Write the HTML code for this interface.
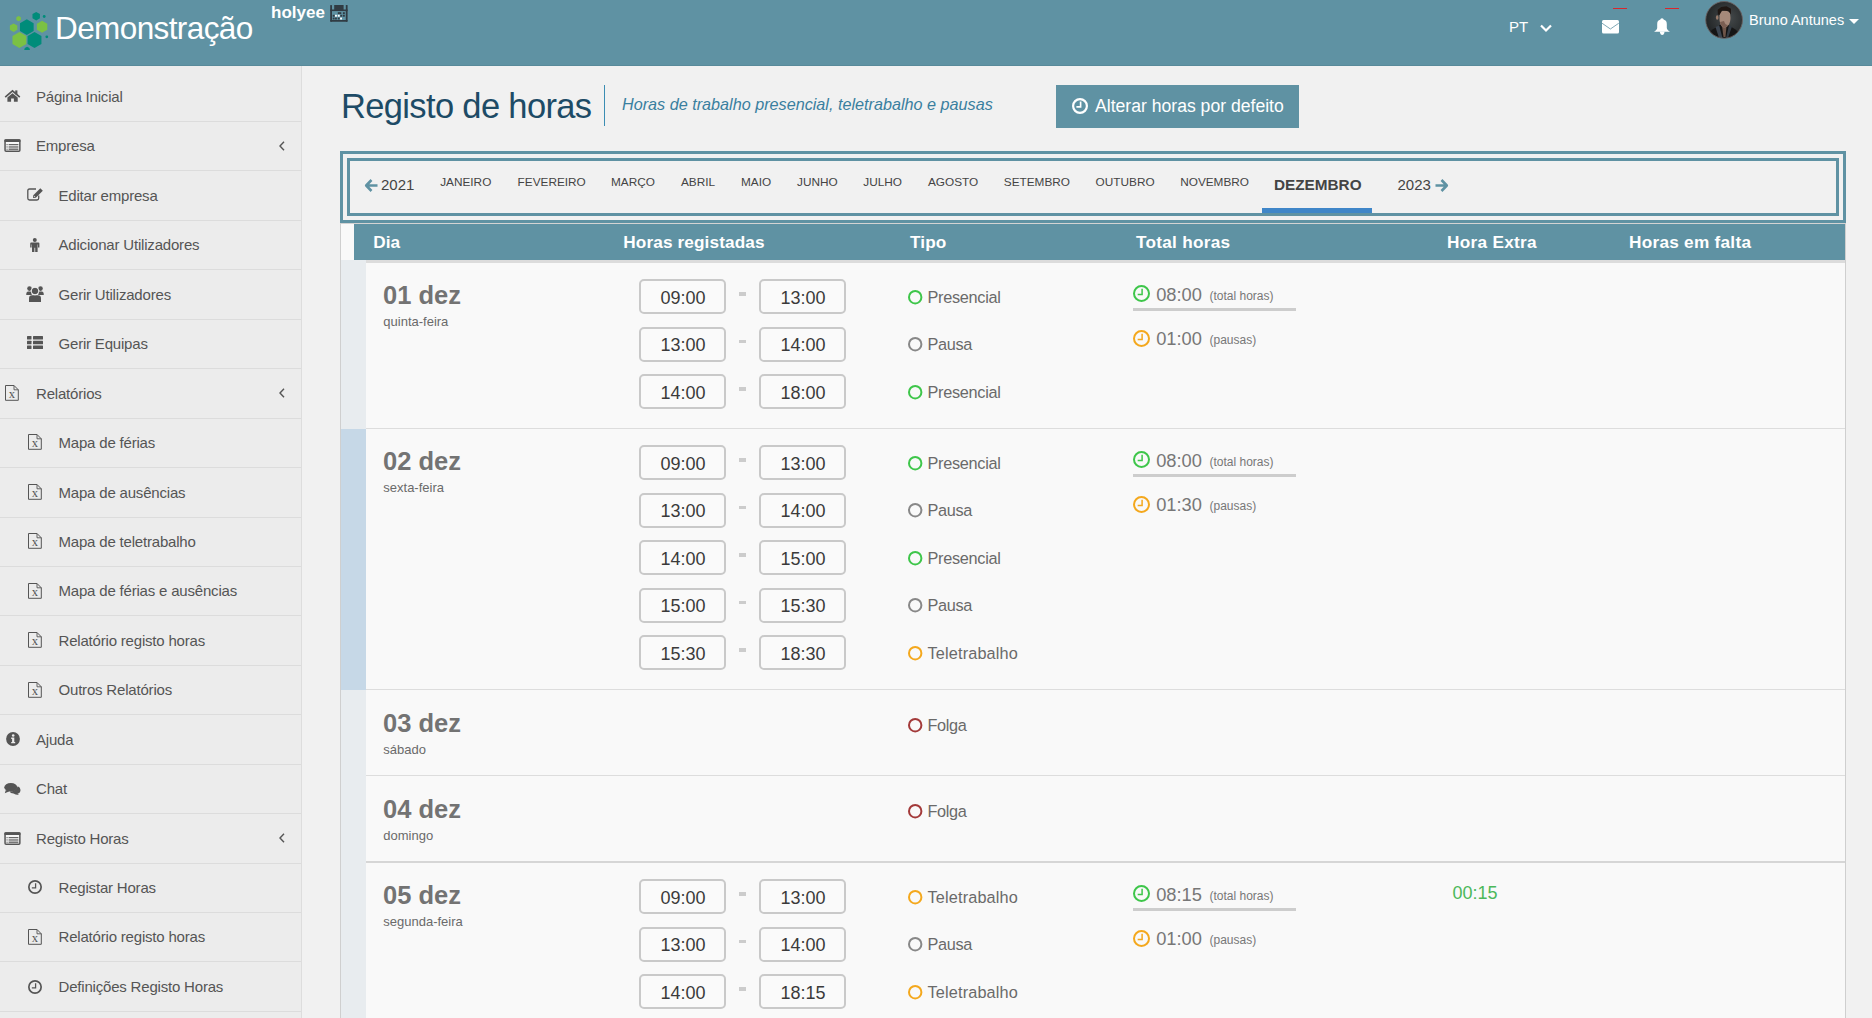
<!DOCTYPE html><html><head><meta charset="utf-8"><style>
*{margin:0;padding:0;box-sizing:border-box}
html,body{width:1872px;height:1018px;overflow:hidden;background:#f1f1f1;font-family:"Liberation Sans",sans-serif}
.t{position:absolute;white-space:nowrap}
.a{position:absolute}
svg{position:absolute;overflow:visible}
</style></head><body>
<div class="a" style="left:0px;top:0px;width:1872px;height:65px;background:#5f92a3;"></div>
<div class="a" style="left:0px;top:65px;width:1872px;height:1px;background:#588a9a;"></div>
<svg style="left:0px;top:0px" width="60" height="60" viewBox="0 0 60 60"><polygon points="26.80,35.00 19.96,31.05 19.96,23.15 26.80,19.20 33.64,23.15 33.64,31.05" fill="#008c7a"/><polygon points="19.40,48.10 12.47,44.10 12.47,36.10 19.40,32.10 26.33,36.10 26.33,44.10" fill="#7bc143"/><polygon points="34.50,48.10 27.57,44.10 27.57,36.10 34.50,32.10 41.43,36.10 41.43,44.10" fill="#008c7a"/><polygon points="42.10,32.80 36.90,29.80 36.90,23.80 42.10,20.80 47.30,23.80 47.30,29.80" fill="#7bc143"/><polygon points="13.60,32.00 9.88,29.85 9.88,25.55 13.60,23.40 17.32,25.55 17.32,29.85" fill="#7bc143"/><polygon points="36.20,20.50 32.48,18.35 32.48,14.05 36.20,11.90 39.92,14.05 39.92,18.35" fill="#008c7a"/><polygon points="18.60,21.20 16.35,19.90 16.35,17.30 18.60,16.00 20.85,17.30 20.85,19.90" fill="#7bc143"/><circle cx="44.2" cy="16.5" r="1.4" fill="#008c7a"/><circle cx="46.8" cy="36.8" r="1.4" fill="#008c7a"/><path d="M24.2,50 L24.8,48 L27.1,46.8 L29.4,48 L30,50 Z" fill="#008c7a"/></svg>
<div class="t" style="left:55px;top:12.58px;font-size:31.5px;line-height:31.5px;color:#ffffff;font-weight:normal;font-style:normal;letter-spacing:-0.6px">Demonstração</div>
<div class="t" style="left:271px;top:3.86px;font-size:17px;line-height:17px;color:#ffffff;font-weight:bold;font-style:normal;">holyee</div>
<svg style="left:325px;top:0px" width="30" height="26" viewBox="0 0 30 26"><rect x="5.2" y="5" width="1.8" height="16.7" rx="0.6" fill="#303b43"/><rect x="20.8" y="5" width="1.8" height="16.7" rx="0.6" fill="#303b43"/><rect x="5.2" y="20" width="17.4" height="1.8" rx="0.8" fill="#303b43"/><rect x="5.2" y="9.5" width="17.4" height="1.6" fill="#303b43"/><rect x="9.2" y="5" width="9.4" height="5.5" fill="#303b43"/><rect x="12.8" y="12.2" width="1.9" height="1.9" fill="#303b43"/><rect x="14.4" y="12.2" width="1.9" height="1.9" fill="#303b43"/><rect x="17.9" y="12.2" width="1.9" height="1.9" fill="#303b43"/><rect x="7.7" y="14.8" width="1.9" height="1.9" fill="#303b43"/><rect x="10" y="14.8" width="1.9" height="1.9" fill="#fff"/><rect x="12.8" y="14.8" width="1.9" height="1.9" fill="#fff"/><rect x="15.3" y="14.8" width="1.9" height="1.9" fill="#303b43"/><rect x="17.9" y="14.8" width="1.9" height="1.9" fill="#303b43"/><rect x="7.7" y="17.6" width="1.9" height="1.9" fill="#303b43"/><rect x="10" y="17.6" width="1.9" height="1.9" fill="#303b43"/><rect x="12.8" y="17.6" width="1.9" height="1.9" fill="#303b43"/><rect x="15.1" y="17.6" width="1.9" height="1.9" fill="#fff"/></svg>
<div class="t" style="left:1509px;top:19.30px;font-size:15px;line-height:15px;color:#ffffff;font-weight:normal;font-style:normal;">PT</div>
<svg style="left:1540px;top:24px" width="12" height="8" viewBox="0 0 12 8"><path d="M1,1.5 L6,6.5 L11,1.5" stroke="#fff" stroke-width="2.2" fill="none"/></svg>
<div class="a" style="left:1613px;top:7.8px;width:14px;height:1.2px;background:#d9262c;"></div>
<div class="a" style="left:1665px;top:7.8px;width:14px;height:1.2px;background:#d9262c;"></div>
<svg style="left:1602px;top:20px" width="17" height="14" viewBox="0 0 17 14"><rect x="0" y="0" width="17" height="13.5" rx="1.5" fill="#fff"/><path d="M0,3.2 L8.4,9 L16.8,3.2" stroke="#5f92a3" stroke-width="0.8" fill="none"/></svg>
<svg style="left:1654.1px;top:17.7px" width="16" height="17" viewBox="0 0 16 17"><path d="M8,0.3 C9.2,0.3 9.6,1.3 9.6,1.6 C11.8,2.2 12.8,3.8 12.8,6 L12.8,10 C12.8,11.5 14.5,12.8 16,13.8 L0,13.8 C1.5,12.8 3.2,11.5 3.2,10 L3.2,6 C3.2,3.8 4.2,2.2 6.4,1.6 C6.4,1.3 6.8,0.3 8,0.3 Z" fill="#fff"/><path d="M5.8,13.5 L10.6,13.5 C10.4,16 9.3,17 8.2,17 C7.1,17 6,16 5.8,13.5 Z" fill="#fff"/></svg>
<svg style="left:1705px;top:1px" width="38" height="38" viewBox="0 0 38 38"><defs><radialGradient id="ag" cx="60%" cy="45%" r="60%"><stop offset="0" stop-color="#464b4d"/><stop offset="1" stop-color="#222526"/></radialGradient><clipPath id="ac"><circle cx="19.1" cy="18.9" r="18.4"/></clipPath></defs><circle cx="19.1" cy="18.9" r="18.4" fill="url(#ag)"/><g clip-path="url(#ac)"><path d="M14,24 L24,24 L23,37 L15,37 Z" fill="#151515"/><path d="M17,25 L21.5,25 L20.5,36 L18.5,36 Z" fill="#6e5549"/><path d="M2,34 C6,29 10,26.5 13.5,25.5 L17.5,37 L2,40 Z" fill="#151515"/><path d="M36,34 C32,29 28,26.5 24.5,25.5 L21.5,37 L36,40 Z" fill="#151515"/><path d="M10.5,26 L14.2,24.6 L17.5,37 L14,37 Z" fill="#3c4550"/><path d="M24,24.6 L27,25.5 L23,37 L21,37 Z" fill="#333b44"/><path d="M14.5,12 C15,9.5 22,9 25,11.5 L25.5,17 C25.5,22 23,26.5 19.5,26.5 C16.5,26.5 15,23 14.5,19 Z" fill="#a5897a"/><path d="M19,20 C20,23 21,24 23,24 C22,26 20.5,26.5 19.5,26.5 C17,26.5 15.5,24 15,21 Z" fill="#7a5e52"/><ellipse cx="12.2" cy="16.5" rx="1.3" ry="2.2" fill="#9a7c6c"/><path d="M12.8,13.6 L12.7,8.7 L16.2,6.1 L21.5,5.2 L26,7.8 L26,13.6 L23.3,10 L17.1,9.6 L14.5,14 Z" fill="#1f1713"/></g><circle cx="19.1" cy="18.9" r="18.4" fill="none" stroke="#6a6262" stroke-width="0.9"/></svg>
<div class="t" style="left:1749px;top:12.97px;font-size:14.5px;line-height:14.5px;color:#ffffff;font-weight:normal;font-style:normal;">Bruno Antunes</div>
<svg style="left:1849px;top:19px" width="10" height="5" viewBox="0 0 10 5"><path d="M0,0 L10,0 L5,5 Z" fill="#fff"/></svg>
<div class="a" style="left:0px;top:66px;width:301px;height:952px;background:#ececec;"></div>
<div class="a" style="left:301px;top:66px;width:1px;height:952px;background:#dddddd;"></div>
<div class="t" style="left:36px;top:89.30px;font-size:15px;line-height:15px;color:#555555;font-weight:normal;font-style:normal;letter-spacing:-0.19px">Página Inicial</div>
<svg style="left:0px;top:0px" width="30" height="110" viewBox="0 0 30 110"><path d="M5.2,97.2 L12.5,90.9 L19.8,97.2" fill="none" stroke="#555555" stroke-width="1.7"/><rect x="15.2" y="90.4" width="2.2" height="4" fill="#555555"/><path d="M7.4,97.6 L12.5,93.3 L17.7,97.6 L17.7,101.8 L13.9,101.8 L13.9,98.6 L11.1,98.6 L11.1,101.8 L7.4,101.8 Z" fill="#555555"/></svg>
<div class="a" style="left:0px;top:121.0px;width:301px;height:1px;background:#dcdcdc;"></div>
<div class="t" style="left:36px;top:138.30px;font-size:15px;line-height:15px;color:#555555;font-weight:normal;font-style:normal;letter-spacing:-0.19px">Empresa</div>
<svg style="left:0.0px;top:0.060000000000002274px" width="30" height="160" viewBox="0 0 30 160"><rect x="5.05" y="140.05" width="14.8" height="11.3" rx="1" fill="#f7f7f7" stroke="#555555" stroke-width="1.5"/><rect x="4.3" y="139.3" width="16.3" height="2.8" rx="1" fill="#555555"/><rect x="6.5" y="144.1" width="1.1" height="1.1" fill="#555555"/><rect x="6.5" y="146.4" width="1.1" height="1.1" fill="#555555"/><rect x="6.5" y="148.7" width="1.1" height="1.1" fill="#555555"/><rect x="8.6" y="144.1" width="9.8" height="1.1" fill="#555555"/><rect x="8.6" y="147.5" width="9.8" height="1.2" fill="#cdcdcd"/><rect x="8.6" y="146.4" width="9.8" height="1.1" fill="#555555"/><rect x="8.6" y="148.7" width="9.8" height="1.1" fill="#555555"/></svg>
<div class="a" style="left:0px;top:170.44px;width:301px;height:1px;background:#dcdcdc;"></div>
<div class="t" style="left:58.5px;top:188.30px;font-size:15px;line-height:15px;color:#555555;font-weight:normal;font-style:normal;letter-spacing:-0.19px">Editar empresa</div>
<svg style="left:27px;top:188px" width="16" height="13" viewBox="0 0 16 13"><path d="M9,1 L2.5,1 Q0.8,1 0.8,2.7 L0.8,10.3 Q0.8,12 2.5,12 L10,12 Q11.7,12 11.7,10.3 L11.7,7.5" fill="none" stroke="#555555" stroke-width="1.3"/><path d="M6,10 L6.3,7.3 L13.3,0.3 L15.8,2.8 L8.8,9.8 Z" fill="#555555"/><path d="M7,8.9 L7.2,7.8 L8.3,8.9 Z" fill="#ececec"/></svg>
<div class="a" style="left:0px;top:219.88px;width:301px;height:1px;background:#dcdcdc;"></div>
<div class="t" style="left:58.5px;top:237.30px;font-size:15px;line-height:15px;color:#555555;font-weight:normal;font-style:normal;letter-spacing:-0.19px">Adicionar Utilizadores</div>
<svg style="left:30px;top:238px" width="10" height="14" viewBox="0 0 10 14"><circle cx="4.8" cy="2" r="2" fill="#555555"/><path d="M1.2,4.6 L8.4,4.6 Q9.4,4.6 9.4,5.6 L9.4,9.5 L8,9.5 L8,6.5 L7.6,6.5 L7.6,14 L5.2,14 L5.2,9.8 L4.4,9.8 L4.4,14 L2,14 L2,6.5 L1.6,6.5 L1.6,9.5 L0.2,9.5 L0.2,5.6 Q0.2,4.6 1.2,4.6 Z" fill="#555555"/></svg>
<div class="a" style="left:0px;top:269.32px;width:301px;height:1px;background:#dcdcdc;"></div>
<div class="t" style="left:58.5px;top:287.30px;font-size:15px;line-height:15px;color:#555555;font-weight:normal;font-style:normal;letter-spacing:-0.19px">Gerir Utilizadores</div>
<svg style="left:26.2px;top:286px" width="18" height="16" viewBox="0 0 18 16"><circle cx="3.5" cy="2.6" r="2.3" fill="#555555"/><circle cx="14.5" cy="2.6" r="2.3" fill="#555555"/><path d="M0.2,9 Q0.2,5.6 2.3,5.6 L5.5,5.6 L5.8,9 Z" fill="#555555"/><path d="M17.8,9 Q17.8,5.6 15.7,5.6 L12.5,5.6 L12.2,9 Z" fill="#555555"/><circle cx="9" cy="5" r="3.2" fill="#555555"/><path d="M3,16 L3,12.5 Q3,9.2 6,9.2 L12,9.2 Q15,9.2 15,12.5 L15,16 Z" fill="#555555"/><circle cx="9" cy="5" r="3.9" fill="none" stroke="#ececec" stroke-width="0.8"/></svg>
<div class="a" style="left:0px;top:318.76px;width:301px;height:1px;background:#dcdcdc;"></div>
<div class="t" style="left:58.5px;top:336.30px;font-size:15px;line-height:15px;color:#555555;font-weight:normal;font-style:normal;letter-spacing:-0.19px">Gerir Equipas</div>
<svg style="left:27px;top:336px" width="16" height="13" viewBox="0 0 16 13"><rect x="0" y="0" width="4.5" height="3.5" rx="0.5" fill="#555555"/><rect x="6" y="0" width="10" height="3.5" rx="0.5" fill="#555555"/><rect x="0" y="4.7" width="4.5" height="3.5" rx="0.5" fill="#555555"/><rect x="6" y="4.7" width="10" height="3.5" rx="0.5" fill="#555555"/><rect x="0" y="9.4" width="4.5" height="3.5" rx="0.5" fill="#555555"/><rect x="6" y="9.4" width="10" height="3.5" rx="0.5" fill="#555555"/></svg>
<div class="a" style="left:0px;top:368.2px;width:301px;height:1px;background:#dcdcdc;"></div>
<div class="t" style="left:36px;top:386.30px;font-size:15px;line-height:15px;color:#555555;font-weight:normal;font-style:normal;letter-spacing:-0.19px">Relatórios</div>
<svg style="left:5.2px;top:385px" width="14" height="16" viewBox="0 0 14 16"><path d="M0.5,0.5 L9,0.5 L13.3,4.8 L13.3,15.3 L0.5,15.3 Z" fill="none" stroke="#555555" stroke-width="1"/><path d="M9,0.5 L9,4.8 L13.3,4.8" fill="none" stroke="#555555" stroke-width="0.9"/><text x="6.9" y="13.3" text-anchor="middle" font-family="Liberation Serif" font-size="12.5" fill="#555555">x</text></svg>
<div class="a" style="left:0px;top:417.64px;width:301px;height:1px;background:#dcdcdc;"></div>
<div class="t" style="left:58.5px;top:435.30px;font-size:15px;line-height:15px;color:#555555;font-weight:normal;font-style:normal;letter-spacing:-0.19px">Mapa de férias</div>
<svg style="left:28px;top:434px" width="14" height="16" viewBox="0 0 14 16"><path d="M0.5,0.5 L9,0.5 L13.3,4.8 L13.3,15.3 L0.5,15.3 Z" fill="none" stroke="#555555" stroke-width="1"/><path d="M9,0.5 L9,4.8 L13.3,4.8" fill="none" stroke="#555555" stroke-width="0.9"/><text x="6.9" y="13.3" text-anchor="middle" font-family="Liberation Serif" font-size="12.5" fill="#555555">x</text></svg>
<div class="a" style="left:0px;top:467.08px;width:301px;height:1px;background:#dcdcdc;"></div>
<div class="t" style="left:58.5px;top:485.30px;font-size:15px;line-height:15px;color:#555555;font-weight:normal;font-style:normal;letter-spacing:-0.19px">Mapa de ausências</div>
<svg style="left:28px;top:483.5px" width="14" height="16" viewBox="0 0 14 16"><path d="M0.5,0.5 L9,0.5 L13.3,4.8 L13.3,15.3 L0.5,15.3 Z" fill="none" stroke="#555555" stroke-width="1"/><path d="M9,0.5 L9,4.8 L13.3,4.8" fill="none" stroke="#555555" stroke-width="0.9"/><text x="6.9" y="13.3" text-anchor="middle" font-family="Liberation Serif" font-size="12.5" fill="#555555">x</text></svg>
<div class="a" style="left:0px;top:516.52px;width:301px;height:1px;background:#dcdcdc;"></div>
<div class="t" style="left:58.5px;top:534.30px;font-size:15px;line-height:15px;color:#555555;font-weight:normal;font-style:normal;letter-spacing:-0.19px">Mapa de teletrabalho</div>
<svg style="left:28px;top:533px" width="14" height="16" viewBox="0 0 14 16"><path d="M0.5,0.5 L9,0.5 L13.3,4.8 L13.3,15.3 L0.5,15.3 Z" fill="none" stroke="#555555" stroke-width="1"/><path d="M9,0.5 L9,4.8 L13.3,4.8" fill="none" stroke="#555555" stroke-width="0.9"/><text x="6.9" y="13.3" text-anchor="middle" font-family="Liberation Serif" font-size="12.5" fill="#555555">x</text></svg>
<div class="a" style="left:0px;top:565.96px;width:301px;height:1px;background:#dcdcdc;"></div>
<div class="t" style="left:58.5px;top:583.30px;font-size:15px;line-height:15px;color:#555555;font-weight:normal;font-style:normal;letter-spacing:-0.19px">Mapa de férias e ausências</div>
<svg style="left:28px;top:582.5px" width="14" height="16" viewBox="0 0 14 16"><path d="M0.5,0.5 L9,0.5 L13.3,4.8 L13.3,15.3 L0.5,15.3 Z" fill="none" stroke="#555555" stroke-width="1"/><path d="M9,0.5 L9,4.8 L13.3,4.8" fill="none" stroke="#555555" stroke-width="0.9"/><text x="6.9" y="13.3" text-anchor="middle" font-family="Liberation Serif" font-size="12.5" fill="#555555">x</text></svg>
<div class="a" style="left:0px;top:615.4px;width:301px;height:1px;background:#dcdcdc;"></div>
<div class="t" style="left:58.5px;top:633.30px;font-size:15px;line-height:15px;color:#555555;font-weight:normal;font-style:normal;letter-spacing:-0.19px">Relatório registo horas</div>
<svg style="left:28px;top:632px" width="14" height="16" viewBox="0 0 14 16"><path d="M0.5,0.5 L9,0.5 L13.3,4.8 L13.3,15.3 L0.5,15.3 Z" fill="none" stroke="#555555" stroke-width="1"/><path d="M9,0.5 L9,4.8 L13.3,4.8" fill="none" stroke="#555555" stroke-width="0.9"/><text x="6.9" y="13.3" text-anchor="middle" font-family="Liberation Serif" font-size="12.5" fill="#555555">x</text></svg>
<div class="a" style="left:0px;top:664.8399999999999px;width:301px;height:1px;background:#dcdcdc;"></div>
<div class="t" style="left:58.5px;top:682.30px;font-size:15px;line-height:15px;color:#555555;font-weight:normal;font-style:normal;letter-spacing:-0.19px">Outros Relatórios</div>
<svg style="left:28px;top:681.5px" width="14" height="16" viewBox="0 0 14 16"><path d="M0.5,0.5 L9,0.5 L13.3,4.8 L13.3,15.3 L0.5,15.3 Z" fill="none" stroke="#555555" stroke-width="1"/><path d="M9,0.5 L9,4.8 L13.3,4.8" fill="none" stroke="#555555" stroke-width="0.9"/><text x="6.9" y="13.3" text-anchor="middle" font-family="Liberation Serif" font-size="12.5" fill="#555555">x</text></svg>
<div class="a" style="left:0px;top:714.28px;width:301px;height:1px;background:#dcdcdc;"></div>
<div class="t" style="left:36px;top:732.30px;font-size:15px;line-height:15px;color:#555555;font-weight:normal;font-style:normal;letter-spacing:-0.19px">Ajuda</div>
<svg style="left:5.5px;top:732px" width="14" height="14" viewBox="0 0 14 14"><circle cx="7" cy="7" r="6.9" fill="#555555"/><circle cx="7.2" cy="3.5" r="1.3" fill="#ececec"/><path d="M5.2,5.6 L8.3,5.6 L8.3,9.9 L9.2,9.9 L9.2,11.3 L5.2,11.3 L5.2,9.9 L6.1,9.9 L6.1,7 L5.2,7 Z" fill="#ececec"/></svg>
<div class="a" style="left:0px;top:763.72px;width:301px;height:1px;background:#dcdcdc;"></div>
<div class="t" style="left:36px;top:781.30px;font-size:15px;line-height:15px;color:#555555;font-weight:normal;font-style:normal;letter-spacing:-0.19px">Chat</div>
<svg style="left:4.3px;top:782.8px" width="17" height="12" viewBox="0 0 17 12"><path d="M16.5,7 Q16.5,10 13.5,10.8 L15,12 Q11,12 9.5,10.6 Q6.5,10.3 5.5,8.5 Q12,8.5 13.8,3.3 Q16.5,4.5 16.5,7 Z" fill="#555555"/><ellipse cx="6.8" cy="4.3" rx="6.5" ry="4.3" fill="#555555"/><path d="M1.8,7 L0.8,10.2 L5.5,8.2 Z" fill="#555555"/></svg>
<div class="a" style="left:0px;top:813.16px;width:301px;height:1px;background:#dcdcdc;"></div>
<div class="t" style="left:36px;top:831.30px;font-size:15px;line-height:15px;color:#555555;font-weight:normal;font-style:normal;letter-spacing:-0.19px">Registo Horas</div>
<svg style="left:0.20000000000000018px;top:692.5px" width="30" height="160" viewBox="0 0 30 160"><rect x="5.05" y="140.05" width="14.8" height="11.3" rx="1" fill="#f7f7f7" stroke="#555555" stroke-width="1.5"/><rect x="4.3" y="139.3" width="16.3" height="2.8" rx="1" fill="#555555"/><rect x="6.5" y="144.1" width="1.1" height="1.1" fill="#555555"/><rect x="6.5" y="146.4" width="1.1" height="1.1" fill="#555555"/><rect x="6.5" y="148.7" width="1.1" height="1.1" fill="#555555"/><rect x="8.6" y="144.1" width="9.8" height="1.1" fill="#555555"/><rect x="8.6" y="147.5" width="9.8" height="1.2" fill="#cdcdcd"/><rect x="8.6" y="146.4" width="9.8" height="1.1" fill="#555555"/><rect x="8.6" y="148.7" width="9.8" height="1.1" fill="#555555"/></svg>
<div class="a" style="left:0px;top:862.5999999999999px;width:301px;height:1px;background:#dcdcdc;"></div>
<div class="t" style="left:58.5px;top:880.30px;font-size:15px;line-height:15px;color:#555555;font-weight:normal;font-style:normal;letter-spacing:-0.19px">Registar Horas</div>
<svg style="left:28px;top:880.3px" width="14" height="14" viewBox="0 0 14 14"><circle cx="7.0" cy="7.0" r="6.15" fill="none" stroke="#555555" stroke-width="1.7"/><path d="M7.6,3.15 L7.6,7.9 L3.8500000000000005,7.9" fill="none" stroke="#555555" stroke-width="1.275"/></svg>
<div class="a" style="left:0px;top:912.04px;width:301px;height:1px;background:#dcdcdc;"></div>
<div class="t" style="left:58.5px;top:929.30px;font-size:15px;line-height:15px;color:#555555;font-weight:normal;font-style:normal;letter-spacing:-0.19px">Relatório registo horas</div>
<svg style="left:28px;top:929px" width="14" height="16" viewBox="0 0 14 16"><path d="M0.5,0.5 L9,0.5 L13.3,4.8 L13.3,15.3 L0.5,15.3 Z" fill="none" stroke="#555555" stroke-width="1"/><path d="M9,0.5 L9,4.8 L13.3,4.8" fill="none" stroke="#555555" stroke-width="0.9"/><text x="6.9" y="13.3" text-anchor="middle" font-family="Liberation Serif" font-size="12.5" fill="#555555">x</text></svg>
<div class="a" style="left:0px;top:961.48px;width:301px;height:1px;background:#dcdcdc;"></div>
<div class="t" style="left:58.5px;top:979.30px;font-size:15px;line-height:15px;color:#555555;font-weight:normal;font-style:normal;letter-spacing:-0.19px">Definições Registo Horas</div>
<svg style="left:28px;top:979.8px" width="14" height="14" viewBox="0 0 14 14"><circle cx="7.0" cy="7.0" r="6.15" fill="none" stroke="#555555" stroke-width="1.7"/><path d="M7.6,3.15 L7.6,7.9 L3.8500000000000005,7.9" fill="none" stroke="#555555" stroke-width="1.275"/></svg>
<div class="a" style="left:0px;top:1010.92px;width:301px;height:1px;background:#dcdcdc;"></div>
<svg style="left:279.3px;top:141.24px" width="6" height="10" viewBox="0 0 6 10"><path d="M5,0.8 L1,5 L5,9.2" fill="none" stroke="#555555" stroke-width="1.4"/></svg>
<svg style="left:279.3px;top:388.44px" width="6" height="10" viewBox="0 0 6 10"><path d="M5,0.8 L1,5 L5,9.2" fill="none" stroke="#555555" stroke-width="1.4"/></svg>
<svg style="left:279.3px;top:833.3999999999999px" width="6" height="10" viewBox="0 0 6 10"><path d="M5,0.8 L1,5 L5,9.2" fill="none" stroke="#555555" stroke-width="1.4"/></svg>
<div class="t" style="left:341px;top:89.04px;font-size:34.5px;line-height:34.5px;color:#1d4b66;font-weight:normal;font-style:normal;letter-spacing:-0.65px">Registo de horas</div>
<div class="a" style="left:604px;top:85px;width:1.3px;height:41px;background:#3b8db3;"></div>
<div class="t" style="left:622px;top:96.28px;font-size:16.2px;line-height:16.2px;color:#3a7f9f;font-weight:normal;font-style:italic;">Horas de trabalho presencial, teletrabalho e pausas</div>
<div class="a" style="left:1056px;top:85px;width:243px;height:43px;background:#5f92a3;"></div>
<svg style="left:1072px;top:97.5px" width="16" height="16" viewBox="0 0 16 16"><circle cx="8.0" cy="8.0" r="6.9" fill="none" stroke="#ffffff" stroke-width="2.2"/><path d="M8.6,3.6 L8.6,8.9 L4.4,8.9" fill="none" stroke="#ffffff" stroke-width="1.6500000000000001"/></svg>
<div class="t" style="left:1095px;top:97.60px;font-size:17.6px;line-height:17.6px;color:#ffffff;font-weight:normal;font-style:normal;">Alterar horas por defeito</div>
<div class="a" style="left:340px;top:151px;width:1506px;height:72px;border:3px solid #5f92a3"></div>
<div class="a" style="left:347px;top:158px;width:1492px;height:58px;border:3px solid #5f92a3"></div>
<svg style="left:364.5px;top:179px" width="13" height="13" viewBox="0 0 13 13"><path d="M6.5,1 L1.2,6.5 L6.5,12 M1.5,6.5 L12.5,6.5" fill="none" stroke="#5f92a3" stroke-width="2.6" stroke-linejoin="round"/></svg>
<div class="t" style="left:381px;top:177.30px;font-size:15px;line-height:15px;color:#444444;font-weight:normal;font-style:normal;">2021</div>
<div class="t" style="left:440.2px;top:176.51px;font-size:11.8px;line-height:11.8px;color:#444444;font-weight:normal;font-style:normal;">JANEIRO</div>
<div class="t" style="left:517.6px;top:176.51px;font-size:11.8px;line-height:11.8px;color:#444444;font-weight:normal;font-style:normal;">FEVEREIRO</div>
<div class="t" style="left:611px;top:176.51px;font-size:11.8px;line-height:11.8px;color:#444444;font-weight:normal;font-style:normal;">MARÇO</div>
<div class="t" style="left:681px;top:176.51px;font-size:11.8px;line-height:11.8px;color:#444444;font-weight:normal;font-style:normal;">ABRIL</div>
<div class="t" style="left:741px;top:176.51px;font-size:11.8px;line-height:11.8px;color:#444444;font-weight:normal;font-style:normal;">MAIO</div>
<div class="t" style="left:797px;top:176.51px;font-size:11.8px;line-height:11.8px;color:#444444;font-weight:normal;font-style:normal;">JUNHO</div>
<div class="t" style="left:863.3px;top:176.51px;font-size:11.8px;line-height:11.8px;color:#444444;font-weight:normal;font-style:normal;">JULHO</div>
<div class="t" style="left:928px;top:176.51px;font-size:11.8px;line-height:11.8px;color:#444444;font-weight:normal;font-style:normal;">AGOSTO</div>
<div class="t" style="left:1003.8px;top:176.51px;font-size:11.8px;line-height:11.8px;color:#444444;font-weight:normal;font-style:normal;">SETEMBRO</div>
<div class="t" style="left:1095.6px;top:176.51px;font-size:11.8px;line-height:11.8px;color:#444444;font-weight:normal;font-style:normal;">OUTUBRO</div>
<div class="t" style="left:1180.2px;top:176.51px;font-size:11.8px;line-height:11.8px;color:#444444;font-weight:normal;font-style:normal;">NOVEMBRO</div>
<div class="t" style="left:1274px;top:177.30px;font-size:15.3px;line-height:15.3px;color:#444444;font-weight:bold;font-style:normal;">DEZEMBRO</div>
<div class="a" style="left:1262px;top:208px;width:110px;height:5px;background:#3f86c8;"></div>
<div class="t" style="left:1397.5px;top:177.30px;font-size:15px;line-height:15px;color:#444444;font-weight:normal;font-style:normal;">2023</div>
<svg style="left:1434.8px;top:179px" width="13" height="13" viewBox="0 0 13 13"><path d="M6.5,1 L11.8,6.5 L6.5,12 M0.5,6.5 L11.5,6.5" fill="none" stroke="#5f92a3" stroke-width="2.6" stroke-linejoin="round"/></svg>
<div class="a" style="left:340px;top:223px;width:1506px;height:795px;background:#f9f9f9;border-left:1px solid #cfcfcf;border-right:1px solid #cfcfcf;border-top:1px solid #d3d3d3"></div>
<div class="a" style="left:354px;top:224px;width:1491px;height:36px;background:#5f92a3;"></div>
<div class="a" style="left:366px;top:260px;width:1479px;height:2.7px;background:#dcdcdc;"></div>
<div class="t" style="left:373.3px;top:233.94px;font-size:17.2px;line-height:17.2px;color:#ffffff;font-weight:bold;font-style:normal;letter-spacing:0px">Dia</div>
<div class="t" style="left:623.3px;top:233.94px;font-size:17.2px;line-height:17.2px;color:#ffffff;font-weight:bold;font-style:normal;letter-spacing:0.12px">Horas registadas</div>
<div class="t" style="left:910px;top:233.94px;font-size:17.2px;line-height:17.2px;color:#ffffff;font-weight:bold;font-style:normal;letter-spacing:0.1px">Tipo</div>
<div class="t" style="left:1136px;top:233.94px;font-size:17.2px;line-height:17.2px;color:#ffffff;font-weight:bold;font-style:normal;letter-spacing:0.28px">Total horas</div>
<div class="t" style="left:1447px;top:233.94px;font-size:17.2px;line-height:17.2px;color:#ffffff;font-weight:bold;font-style:normal;letter-spacing:0.3px">Hora Extra</div>
<div class="t" style="left:1629px;top:233.94px;font-size:17.2px;line-height:17.2px;color:#ffffff;font-weight:bold;font-style:normal;letter-spacing:0.27px">Horas em falta</div>
<div class="a" style="left:341px;top:260px;width:25px;height:170px;background:#e8ecef;"></div>
<div class="a" style="left:366px;top:428px;width:1479px;height:1px;background:#dddddd;"></div>
<div class="t" style="left:383px;top:282.91px;font-size:25.5px;line-height:25.5px;color:#737373;font-weight:bold;font-style:normal;">01 dez</div>
<div class="t" style="left:383.3px;top:315.24px;font-size:13px;line-height:13px;color:#6a6a6a;font-weight:normal;font-style:normal;">quinta-feira</div>
<div class="a" style="left:639px;top:279.3px;width:87px;height:35px;border:2px solid #c9c9c9;border-radius:5px;background:#fafafa"></div>
<div class="t" style="left:660.5px;top:289.01px;font-size:18px;line-height:18px;color:#3a3a3a;font-weight:normal;font-style:normal;">09:00</div>
<div class="a" style="left:739px;top:292.3px;width:7px;height:3.5px;background:#cccccc;"></div>
<div class="a" style="left:759px;top:279.3px;width:87px;height:35px;border:2px solid #c9c9c9;border-radius:5px;background:#fafafa"></div>
<div class="t" style="left:780.5px;top:289.01px;font-size:18px;line-height:18px;color:#3a3a3a;font-weight:normal;font-style:normal;">13:00</div>
<svg style="left:907.6px;top:289.6px" width="15" height="15" viewBox="0 0 15 15"><circle cx="7.2" cy="7.2" r="6.2" fill="none" stroke="#3ec64a" stroke-width="2"/></svg>
<div class="t" style="left:927.5px;top:289.45px;font-size:16.3px;line-height:16.3px;color:#6a6a6a;font-weight:normal;font-style:normal;letter-spacing:-0.3px">Presencial</div>
<div class="a" style="left:639px;top:326.8px;width:87px;height:35px;border:2px solid #c9c9c9;border-radius:5px;background:#fafafa"></div>
<div class="t" style="left:660.5px;top:336.01px;font-size:18px;line-height:18px;color:#3a3a3a;font-weight:normal;font-style:normal;">13:00</div>
<div class="a" style="left:739px;top:339.8px;width:7px;height:3.5px;background:#cccccc;"></div>
<div class="a" style="left:759px;top:326.8px;width:87px;height:35px;border:2px solid #c9c9c9;border-radius:5px;background:#fafafa"></div>
<div class="t" style="left:780.5px;top:336.01px;font-size:18px;line-height:18px;color:#3a3a3a;font-weight:normal;font-style:normal;">14:00</div>
<svg style="left:907.6px;top:337.1px" width="15" height="15" viewBox="0 0 15 15"><circle cx="7.2" cy="7.2" r="6.2" fill="none" stroke="#888888" stroke-width="2"/></svg>
<div class="t" style="left:927.5px;top:336.45px;font-size:16.3px;line-height:16.3px;color:#6a6a6a;font-weight:normal;font-style:normal;letter-spacing:-0.35px">Pausa</div>
<div class="a" style="left:639px;top:374.3px;width:87px;height:35px;border:2px solid #c9c9c9;border-radius:5px;background:#fafafa"></div>
<div class="t" style="left:660.5px;top:384.01px;font-size:18px;line-height:18px;color:#3a3a3a;font-weight:normal;font-style:normal;">14:00</div>
<div class="a" style="left:739px;top:387.3px;width:7px;height:3.5px;background:#cccccc;"></div>
<div class="a" style="left:759px;top:374.3px;width:87px;height:35px;border:2px solid #c9c9c9;border-radius:5px;background:#fafafa"></div>
<div class="t" style="left:780.5px;top:384.01px;font-size:18px;line-height:18px;color:#3a3a3a;font-weight:normal;font-style:normal;">18:00</div>
<svg style="left:907.6px;top:384.6px" width="15" height="15" viewBox="0 0 15 15"><circle cx="7.2" cy="7.2" r="6.2" fill="none" stroke="#3ec64a" stroke-width="2"/></svg>
<div class="t" style="left:927.5px;top:384.45px;font-size:16.3px;line-height:16.3px;color:#6a6a6a;font-weight:normal;font-style:normal;letter-spacing:-0.3px">Presencial</div>
<svg style="left:1133.2px;top:285.3px" width="17" height="17" viewBox="0 0 17 17"><circle cx="8.5" cy="8.5" r="7.5" fill="none" stroke="#3ec64a" stroke-width="2"/><path d="M9.1,3.825 L9.1,9.4 L4.675000000000001,9.4" fill="none" stroke="#3ec64a" stroke-width="1.5"/></svg>
<div class="t" style="left:1156.2px;top:285.76px;font-size:18.3px;line-height:18.3px;color:#777777;font-weight:normal;font-style:normal;">08:00</div>
<div class="t" style="left:1209.5px;top:290.09px;font-size:12px;line-height:12px;color:#777777;font-weight:normal;font-style:normal;">(total horas)</div>
<div class="a" style="left:1133px;top:308.2px;width:163px;height:3px;background:#cdcdcd;"></div>
<svg style="left:1133.2px;top:329.5px" width="17" height="17" viewBox="0 0 17 17"><circle cx="8.5" cy="8.5" r="7.5" fill="none" stroke="#f4a81d" stroke-width="2"/><path d="M9.1,3.825 L9.1,9.4 L4.675000000000001,9.4" fill="none" stroke="#f4a81d" stroke-width="1.5"/></svg>
<div class="t" style="left:1156.2px;top:329.76px;font-size:18.3px;line-height:18.3px;color:#777777;font-weight:normal;font-style:normal;">01:00</div>
<div class="t" style="left:1209.5px;top:334.09px;font-size:12px;line-height:12px;color:#777777;font-weight:normal;font-style:normal;">(pausas)</div>
<div class="a" style="left:341px;top:429px;width:25px;height:262px;background:#c6d8e7;"></div>
<div class="a" style="left:366px;top:689px;width:1479px;height:1px;background:#dddddd;"></div>
<div class="t" style="left:383px;top:448.91px;font-size:25.5px;line-height:25.5px;color:#737373;font-weight:bold;font-style:normal;">02 dez</div>
<div class="t" style="left:383.3px;top:481.24px;font-size:13px;line-height:13px;color:#6a6a6a;font-weight:normal;font-style:normal;">sexta-feira</div>
<div class="a" style="left:639px;top:445.3px;width:87px;height:35px;border:2px solid #c9c9c9;border-radius:5px;background:#fafafa"></div>
<div class="t" style="left:660.5px;top:455.01px;font-size:18px;line-height:18px;color:#3a3a3a;font-weight:normal;font-style:normal;">09:00</div>
<div class="a" style="left:739px;top:458.3px;width:7px;height:3.5px;background:#cccccc;"></div>
<div class="a" style="left:759px;top:445.3px;width:87px;height:35px;border:2px solid #c9c9c9;border-radius:5px;background:#fafafa"></div>
<div class="t" style="left:780.5px;top:455.01px;font-size:18px;line-height:18px;color:#3a3a3a;font-weight:normal;font-style:normal;">13:00</div>
<svg style="left:907.6px;top:455.6px" width="15" height="15" viewBox="0 0 15 15"><circle cx="7.2" cy="7.2" r="6.2" fill="none" stroke="#3ec64a" stroke-width="2"/></svg>
<div class="t" style="left:927.5px;top:455.45px;font-size:16.3px;line-height:16.3px;color:#6a6a6a;font-weight:normal;font-style:normal;letter-spacing:-0.3px">Presencial</div>
<div class="a" style="left:639px;top:492.8px;width:87px;height:35px;border:2px solid #c9c9c9;border-radius:5px;background:#fafafa"></div>
<div class="t" style="left:660.5px;top:502.01px;font-size:18px;line-height:18px;color:#3a3a3a;font-weight:normal;font-style:normal;">13:00</div>
<div class="a" style="left:739px;top:505.8px;width:7px;height:3.5px;background:#cccccc;"></div>
<div class="a" style="left:759px;top:492.8px;width:87px;height:35px;border:2px solid #c9c9c9;border-radius:5px;background:#fafafa"></div>
<div class="t" style="left:780.5px;top:502.01px;font-size:18px;line-height:18px;color:#3a3a3a;font-weight:normal;font-style:normal;">14:00</div>
<svg style="left:907.6px;top:503.1px" width="15" height="15" viewBox="0 0 15 15"><circle cx="7.2" cy="7.2" r="6.2" fill="none" stroke="#888888" stroke-width="2"/></svg>
<div class="t" style="left:927.5px;top:502.45px;font-size:16.3px;line-height:16.3px;color:#6a6a6a;font-weight:normal;font-style:normal;letter-spacing:-0.35px">Pausa</div>
<div class="a" style="left:639px;top:540.3px;width:87px;height:35px;border:2px solid #c9c9c9;border-radius:5px;background:#fafafa"></div>
<div class="t" style="left:660.5px;top:550.01px;font-size:18px;line-height:18px;color:#3a3a3a;font-weight:normal;font-style:normal;">14:00</div>
<div class="a" style="left:739px;top:553.3px;width:7px;height:3.5px;background:#cccccc;"></div>
<div class="a" style="left:759px;top:540.3px;width:87px;height:35px;border:2px solid #c9c9c9;border-radius:5px;background:#fafafa"></div>
<div class="t" style="left:780.5px;top:550.01px;font-size:18px;line-height:18px;color:#3a3a3a;font-weight:normal;font-style:normal;">15:00</div>
<svg style="left:907.6px;top:550.5999999999999px" width="15" height="15" viewBox="0 0 15 15"><circle cx="7.2" cy="7.2" r="6.2" fill="none" stroke="#3ec64a" stroke-width="2"/></svg>
<div class="t" style="left:927.5px;top:550.45px;font-size:16.3px;line-height:16.3px;color:#6a6a6a;font-weight:normal;font-style:normal;letter-spacing:-0.3px">Presencial</div>
<div class="a" style="left:639px;top:587.8px;width:87px;height:35px;border:2px solid #c9c9c9;border-radius:5px;background:#fafafa"></div>
<div class="t" style="left:660.5px;top:597.01px;font-size:18px;line-height:18px;color:#3a3a3a;font-weight:normal;font-style:normal;">15:00</div>
<div class="a" style="left:739px;top:600.8px;width:7px;height:3.5px;background:#cccccc;"></div>
<div class="a" style="left:759px;top:587.8px;width:87px;height:35px;border:2px solid #c9c9c9;border-radius:5px;background:#fafafa"></div>
<div class="t" style="left:780.5px;top:597.01px;font-size:18px;line-height:18px;color:#3a3a3a;font-weight:normal;font-style:normal;">15:30</div>
<svg style="left:907.6px;top:598.0999999999999px" width="15" height="15" viewBox="0 0 15 15"><circle cx="7.2" cy="7.2" r="6.2" fill="none" stroke="#888888" stroke-width="2"/></svg>
<div class="t" style="left:927.5px;top:597.45px;font-size:16.3px;line-height:16.3px;color:#6a6a6a;font-weight:normal;font-style:normal;letter-spacing:-0.35px">Pausa</div>
<div class="a" style="left:639px;top:635.3px;width:87px;height:35px;border:2px solid #c9c9c9;border-radius:5px;background:#fafafa"></div>
<div class="t" style="left:660.5px;top:645.01px;font-size:18px;line-height:18px;color:#3a3a3a;font-weight:normal;font-style:normal;">15:30</div>
<div class="a" style="left:739px;top:648.3px;width:7px;height:3.5px;background:#cccccc;"></div>
<div class="a" style="left:759px;top:635.3px;width:87px;height:35px;border:2px solid #c9c9c9;border-radius:5px;background:#fafafa"></div>
<div class="t" style="left:780.5px;top:645.01px;font-size:18px;line-height:18px;color:#3a3a3a;font-weight:normal;font-style:normal;">18:30</div>
<svg style="left:907.6px;top:645.5999999999999px" width="15" height="15" viewBox="0 0 15 15"><circle cx="7.2" cy="7.2" r="6.2" fill="none" stroke="#f4a81d" stroke-width="2"/></svg>
<div class="t" style="left:927.5px;top:645.45px;font-size:16.3px;line-height:16.3px;color:#6a6a6a;font-weight:normal;font-style:normal;letter-spacing:0.15px">Teletrabalho</div>
<svg style="left:1133.2px;top:451.3px" width="17" height="17" viewBox="0 0 17 17"><circle cx="8.5" cy="8.5" r="7.5" fill="none" stroke="#3ec64a" stroke-width="2"/><path d="M9.1,3.825 L9.1,9.4 L4.675000000000001,9.4" fill="none" stroke="#3ec64a" stroke-width="1.5"/></svg>
<div class="t" style="left:1156.2px;top:451.76px;font-size:18.3px;line-height:18.3px;color:#777777;font-weight:normal;font-style:normal;">08:00</div>
<div class="t" style="left:1209.5px;top:456.09px;font-size:12px;line-height:12px;color:#777777;font-weight:normal;font-style:normal;">(total horas)</div>
<div class="a" style="left:1133px;top:474.2px;width:163px;height:3px;background:#cdcdcd;"></div>
<svg style="left:1133.2px;top:495.5px" width="17" height="17" viewBox="0 0 17 17"><circle cx="8.5" cy="8.5" r="7.5" fill="none" stroke="#f4a81d" stroke-width="2"/><path d="M9.1,3.825 L9.1,9.4 L4.675000000000001,9.4" fill="none" stroke="#f4a81d" stroke-width="1.5"/></svg>
<div class="t" style="left:1156.2px;top:495.76px;font-size:18.3px;line-height:18.3px;color:#777777;font-weight:normal;font-style:normal;">01:30</div>
<div class="t" style="left:1209.5px;top:500.09px;font-size:12px;line-height:12px;color:#777777;font-weight:normal;font-style:normal;">(pausas)</div>
<div class="a" style="left:341px;top:690px;width:25px;height:87px;background:#e8ecef;"></div>
<div class="a" style="left:366px;top:775px;width:1479px;height:1px;background:#dddddd;"></div>
<div class="t" style="left:383px;top:710.91px;font-size:25.5px;line-height:25.5px;color:#737373;font-weight:bold;font-style:normal;">03 dez</div>
<div class="t" style="left:383.3px;top:743.24px;font-size:13px;line-height:13px;color:#6a6a6a;font-weight:normal;font-style:normal;">sábado</div>
<svg style="left:907.6px;top:717.5px" width="15" height="15" viewBox="0 0 15 15"><circle cx="7.2" cy="7.2" r="6.2" fill="none" stroke="#a33a3a" stroke-width="2"/></svg>
<div class="t" style="left:927.5px;top:717.45px;font-size:16.3px;line-height:16.3px;color:#6a6a6a;font-weight:normal;font-style:normal;letter-spacing:-0.35px">Folga</div>
<div class="a" style="left:341px;top:776px;width:25px;height:87px;background:#e8ecef;"></div>
<div class="a" style="left:366px;top:861px;width:1479px;height:2px;background:#d6d6d6;"></div>
<div class="t" style="left:383px;top:796.91px;font-size:25.5px;line-height:25.5px;color:#737373;font-weight:bold;font-style:normal;">04 dez</div>
<div class="t" style="left:383.3px;top:829.24px;font-size:13px;line-height:13px;color:#6a6a6a;font-weight:normal;font-style:normal;">domingo</div>
<svg style="left:907.6px;top:803.5px" width="15" height="15" viewBox="0 0 15 15"><circle cx="7.2" cy="7.2" r="6.2" fill="none" stroke="#a33a3a" stroke-width="2"/></svg>
<div class="t" style="left:927.5px;top:803.45px;font-size:16.3px;line-height:16.3px;color:#6a6a6a;font-weight:normal;font-style:normal;letter-spacing:-0.35px">Folga</div>
<div class="a" style="left:341px;top:863px;width:25px;height:157px;background:#e8ecef;"></div>
<div class="a" style="left:366px;top:1018px;width:1479px;height:1px;background:#dddddd;"></div>
<div class="t" style="left:383px;top:882.91px;font-size:25.5px;line-height:25.5px;color:#737373;font-weight:bold;font-style:normal;">05 dez</div>
<div class="t" style="left:383.3px;top:915.24px;font-size:13px;line-height:13px;color:#6a6a6a;font-weight:normal;font-style:normal;">segunda-feira</div>
<div class="a" style="left:639px;top:879.3px;width:87px;height:35px;border:2px solid #c9c9c9;border-radius:5px;background:#fafafa"></div>
<div class="t" style="left:660.5px;top:889.01px;font-size:18px;line-height:18px;color:#3a3a3a;font-weight:normal;font-style:normal;">09:00</div>
<div class="a" style="left:739px;top:892.3px;width:7px;height:3.5px;background:#cccccc;"></div>
<div class="a" style="left:759px;top:879.3px;width:87px;height:35px;border:2px solid #c9c9c9;border-radius:5px;background:#fafafa"></div>
<div class="t" style="left:780.5px;top:889.01px;font-size:18px;line-height:18px;color:#3a3a3a;font-weight:normal;font-style:normal;">13:00</div>
<svg style="left:907.6px;top:889.5999999999999px" width="15" height="15" viewBox="0 0 15 15"><circle cx="7.2" cy="7.2" r="6.2" fill="none" stroke="#f4a81d" stroke-width="2"/></svg>
<div class="t" style="left:927.5px;top:889.45px;font-size:16.3px;line-height:16.3px;color:#6a6a6a;font-weight:normal;font-style:normal;letter-spacing:0.15px">Teletrabalho</div>
<div class="a" style="left:639px;top:926.8px;width:87px;height:35px;border:2px solid #c9c9c9;border-radius:5px;background:#fafafa"></div>
<div class="t" style="left:660.5px;top:936.01px;font-size:18px;line-height:18px;color:#3a3a3a;font-weight:normal;font-style:normal;">13:00</div>
<div class="a" style="left:739px;top:939.8px;width:7px;height:3.5px;background:#cccccc;"></div>
<div class="a" style="left:759px;top:926.8px;width:87px;height:35px;border:2px solid #c9c9c9;border-radius:5px;background:#fafafa"></div>
<div class="t" style="left:780.5px;top:936.01px;font-size:18px;line-height:18px;color:#3a3a3a;font-weight:normal;font-style:normal;">14:00</div>
<svg style="left:907.6px;top:937.0999999999999px" width="15" height="15" viewBox="0 0 15 15"><circle cx="7.2" cy="7.2" r="6.2" fill="none" stroke="#888888" stroke-width="2"/></svg>
<div class="t" style="left:927.5px;top:936.45px;font-size:16.3px;line-height:16.3px;color:#6a6a6a;font-weight:normal;font-style:normal;letter-spacing:-0.35px">Pausa</div>
<div class="a" style="left:639px;top:974.3px;width:87px;height:35px;border:2px solid #c9c9c9;border-radius:5px;background:#fafafa"></div>
<div class="t" style="left:660.5px;top:984.01px;font-size:18px;line-height:18px;color:#3a3a3a;font-weight:normal;font-style:normal;">14:00</div>
<div class="a" style="left:739px;top:987.3px;width:7px;height:3.5px;background:#cccccc;"></div>
<div class="a" style="left:759px;top:974.3px;width:87px;height:35px;border:2px solid #c9c9c9;border-radius:5px;background:#fafafa"></div>
<div class="t" style="left:780.5px;top:984.01px;font-size:18px;line-height:18px;color:#3a3a3a;font-weight:normal;font-style:normal;">18:15</div>
<svg style="left:907.6px;top:984.5999999999999px" width="15" height="15" viewBox="0 0 15 15"><circle cx="7.2" cy="7.2" r="6.2" fill="none" stroke="#f4a81d" stroke-width="2"/></svg>
<div class="t" style="left:927.5px;top:984.45px;font-size:16.3px;line-height:16.3px;color:#6a6a6a;font-weight:normal;font-style:normal;letter-spacing:0.15px">Teletrabalho</div>
<svg style="left:1133.2px;top:885.3px" width="17" height="17" viewBox="0 0 17 17"><circle cx="8.5" cy="8.5" r="7.5" fill="none" stroke="#3ec64a" stroke-width="2"/><path d="M9.1,3.825 L9.1,9.4 L4.675000000000001,9.4" fill="none" stroke="#3ec64a" stroke-width="1.5"/></svg>
<div class="t" style="left:1156.2px;top:885.76px;font-size:18.3px;line-height:18.3px;color:#777777;font-weight:normal;font-style:normal;">08:15</div>
<div class="t" style="left:1209.5px;top:890.09px;font-size:12px;line-height:12px;color:#777777;font-weight:normal;font-style:normal;">(total horas)</div>
<div class="a" style="left:1133px;top:908.2px;width:163px;height:3px;background:#cdcdcd;"></div>
<svg style="left:1133.2px;top:929.5px" width="17" height="17" viewBox="0 0 17 17"><circle cx="8.5" cy="8.5" r="7.5" fill="none" stroke="#f4a81d" stroke-width="2"/><path d="M9.1,3.825 L9.1,9.4 L4.675000000000001,9.4" fill="none" stroke="#f4a81d" stroke-width="1.5"/></svg>
<div class="t" style="left:1156.2px;top:929.76px;font-size:18.3px;line-height:18.3px;color:#777777;font-weight:normal;font-style:normal;">01:00</div>
<div class="t" style="left:1209.5px;top:934.09px;font-size:12px;line-height:12px;color:#777777;font-weight:normal;font-style:normal;">(pausas)</div>
<div class="t" style="left:1452.5px;top:884.01px;font-size:18px;line-height:18px;color:#4cb85a;font-weight:normal;font-style:normal;">00:15</div>
</body></html>
